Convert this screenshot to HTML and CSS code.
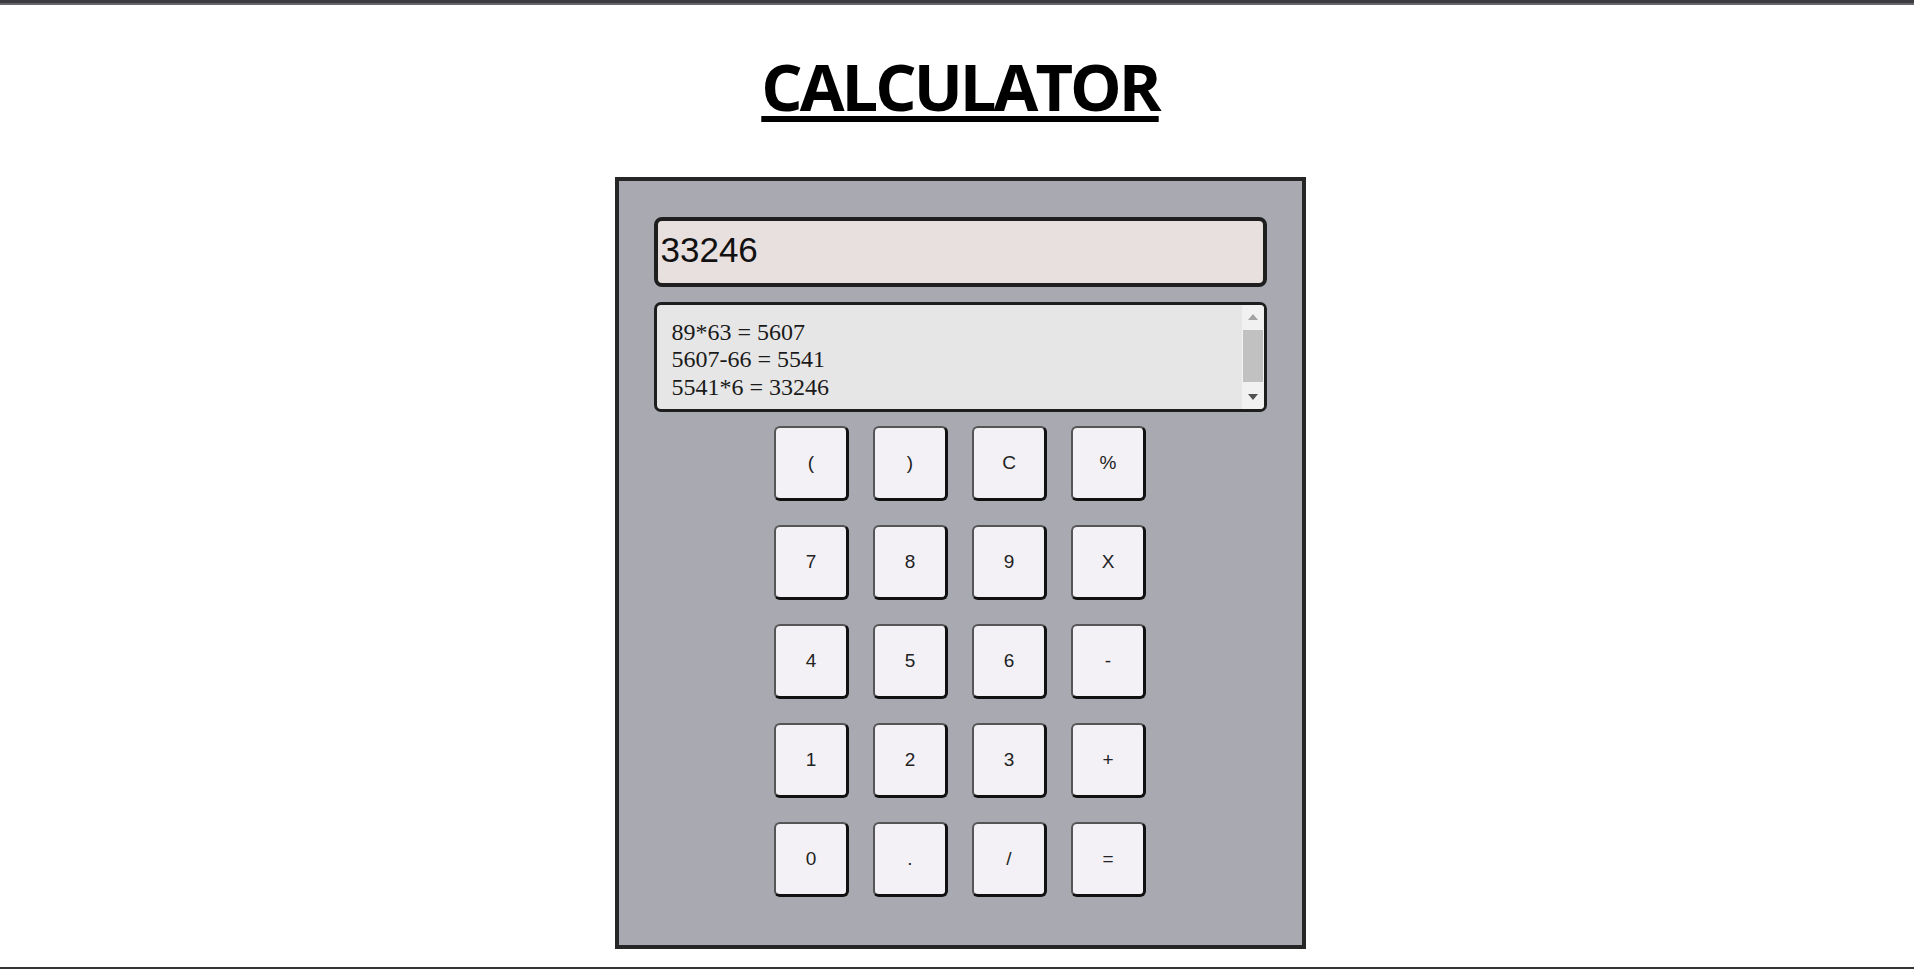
FILE: index.html
```html
<!DOCTYPE html>
<html lang="en">
<head>
<meta charset="utf-8">
<title>Calculator</title>
<link rel="stylesheet" href="styles.css">
</head>
<body>
<div class="topbar"></div>
<main class="page">
  <h1 class="title">CALCULATOR</h1>
  <section class="calc">
    <div class="display">33246</div>
    <div class="history">
      <div class="history-lines">
        <div>89*63 = 5607</div>
        <div>5607-66 = 5541</div>
        <div>5541*6 = 33246</div>
      </div>
      <div class="scrollbar">
        <div class="sb-btn"><span class="arrow-up"></span></div>
        <div class="sb-thumb"></div>
        <div class="sb-space"></div>
        <div class="sb-btn"><span class="arrow-down"></span></div>
      </div>
    </div>
    <div class="keys">
      <button class="key">(</button>
      <button class="key">)</button>
      <button class="key">C</button>
      <button class="key">%</button>
      <button class="key">7</button>
      <button class="key">8</button>
      <button class="key">9</button>
      <button class="key">X</button>
      <button class="key">4</button>
      <button class="key">5</button>
      <button class="key">6</button>
      <button class="key">-</button>
      <button class="key">1</button>
      <button class="key">2</button>
      <button class="key">3</button>
      <button class="key">+</button>
      <button class="key">0</button>
      <button class="key">.</button>
      <button class="key">/</button>
      <button class="key">=</button>
    </div>
  </section>
</main>
<div class="bottombar"></div>
</body>
</html>
```
FILE: styles.css
```css
html, body {
  margin: 0;
  padding: 0;
  background: #ffffff;
}

body {
  font-family: "Liberation Sans", Arial, sans-serif;
  height: 969px;
  overflow: hidden;
}

.topbar {
  height: 3px;
  background: #3b3b42;
  border-bottom: 2px solid #66666a;
}

.page {
  display: flex;
  flex-direction: column;
  align-items: center;
  padding-left: 6px;
}

.title {
  margin: 41px 0 0 0;
  font-family: "Open Sans", "DejaVu Sans", sans-serif;
  font-weight: 700;
  font-size: 65px;
  line-height: 80px;
  letter-spacing: -3px;
  color: #000;
  text-decoration: underline;
  text-decoration-thickness: 6px;
  text-underline-offset: 5px;
}

.calc {
  margin-top: 51px;
  width: 683px;
  height: 764px;
  background: #a9a9b1;
  border: 4px solid #262626;
  box-sizing: content-box;
  display: flex;
  flex-direction: column;
  align-items: center;
}

.display {
  margin-top: 36px;
  width: 613px;
  height: 70px;
  box-sizing: border-box;
  border: 4px solid #1e1e1e;
  border-radius: 8px;
  background: #e8dfdf;
  font-family: "Liberation Sans", Arial, sans-serif;
  font-size: 35px;
  line-height: 58px;
  padding: 0 0 4px 3px;
  color: #111;
}

.history {
  margin-top: 15px;
  width: 613px;
  height: 110px;
  box-sizing: border-box;
  border: 3px solid #1e1e1e;
  border-radius: 7px;
  background: #e6e6e6;
  display: flex;
  overflow: hidden;
}

.history-lines {
  flex: 1;
  padding: 14px 15px;
  font-family: "Liberation Serif", "Times New Roman", serif;
  font-size: 24px;
  line-height: 27.4px;
  color: #1a1a1a;
  overflow: hidden;
}

.scrollbar {
  width: 22px;
  background: #f1f1f1;
  display: flex;
  flex-direction: column;
}

.sb-btn {
  height: 24px;
  display: flex;
  align-items: center;
  justify-content: center;
}

.arrow-up {
  width: 0;
  height: 0;
  border-left: 5px solid transparent;
  border-right: 5px solid transparent;
  border-bottom: 6px solid #a3a3a3;
}

.arrow-down {
  width: 0;
  height: 0;
  border-left: 5px solid transparent;
  border-right: 5px solid transparent;
  border-top: 6px solid #505050;
}

.sb-thumb {
  height: 52px;
  margin: 1px 1px 0 1px;
  background: #c1c1c1;
}

.sb-space {
  flex: 1;
}

.keys {
  margin-top: 14px;
  display: grid;
  grid-template-columns: repeat(4, 75px);
  grid-auto-rows: 75px;
  column-gap: 24px;
  row-gap: 24px;
}

.key {
  margin: 0;
  padding: 0;
  box-sizing: border-box;
  width: 75px;
  height: 75px;
  background: #f3f1f6;
  border-style: solid;
  border-width: 2px 3px 3px 2px;
  border-color: #555555 #111111 #111111 #555555;
  border-radius: 6px;
  font-family: "Liberation Sans", Arial, sans-serif;
  font-size: 19px;
  color: #222;
  display: flex;
  align-items: center;
  justify-content: center;
}

.bottombar {
  position: absolute;
  left: 0;
  right: 0;
  top: 967px;
  height: 2px;
  background: #333338;
}
```
